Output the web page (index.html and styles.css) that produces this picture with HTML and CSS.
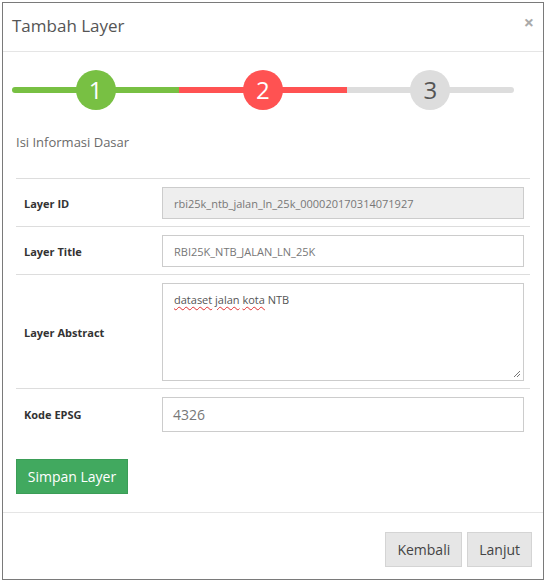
FILE: index.html
```html
<!DOCTYPE html>
<html lang="id">
<head>
<meta charset="utf-8">
<title>Tambah Layer</title>
<link rel="stylesheet" href="styles.css">
</head>
<body>
<div class="modal">
  <div class="modal-header">
    <h4 class="modal-title">Tambah Layer</h4>
    <span class="close">×</span>
  </div>
  <div class="modal-body">
    <div class="steps">
      <div class="step step-done"><span class="bar"></span><span class="circle">1</span></div>
      <div class="step step-active"><span class="bar"></span><span class="circle">2</span></div>
      <div class="step step-todo"><span class="bar"></span><span class="circle">3</span></div>
    </div>
    <p class="step-caption">Isi Informasi Dasar</p>
    <table class="form-table">
      <tr>
        <th>Layer ID</th>
        <td><div class="input input-sm input-readonly">rbi25k_ntb_jalan_ln_25k_000020170314071927</div></td>
      </tr>
      <tr>
        <th>Layer Title</th>
        <td><div class="input input-sm">RBI25K_NTB_JALAN_LN_25K</div></td>
      </tr>
      <tr>
        <th>Layer Abstract</th>
        <td>
          <div class="input textarea"><span class="typo">dataset</span> <span class="typo">jalan</span> <span class="typo">kota</span> NTB<svg class="grip" width="9" height="9" viewBox="0 0 9 9"><path d="M8 2 L2 8 M8 5 L5 8" stroke="#777" stroke-width="1" fill="none"/></svg></div>
        </td>
      </tr>
      <tr class="last">
        <th>Kode EPSG</th>
        <td><div class="input input-md">4326</div></td>
      </tr>
    </table>
    <button class="btn btn-success">Simpan Layer</button>
  </div>
  <div class="modal-footer">
    <button class="btn btn-default">Kembali</button>
    <button class="btn btn-default">Lanjut</button>
  </div>
</div>
</body>
</html>
```
FILE: styles.css
```css
* { box-sizing: border-box; }
html, body { margin: 0; padding: 0; background: #fff; }
body {
  font-family: "Open Sans", "Noto Sans", sans-serif;
  color: #333;
  padding: 2px 0 0 2px;
}
.modal {
  width: 542px;
  border: 1px solid #7a7a7a;
  background: #fff;
}
.modal-header {
  height: 49px;
  border-bottom: 1px solid #e5e5e5;
  display: flex;
  align-items: center;
  justify-content: space-between;
  padding: 0 9px 4px 9px;
}
.modal-title {
  margin: 0;
  font-size: 17px;
  font-weight: 400;
  color: #555;
}
.close {
  font-size: 18px;
  font-weight: 700;
  color: #aaa;
  line-height: 1;
  margin-top: -6px;
}
.modal-body {
  padding: 18px 13px 18px 13px;
}
.steps {
  display: flex;
  margin: 0 16px 0 -4px;
}
.step {
  flex: 1;
  position: relative;
  height: 40px;
  display: flex;
  align-items: center;
  justify-content: center;
}
.bar {
  position: absolute;
  left: 0;
  right: 0;
  top: 17px;
  height: 6px;
}
.circle {
  position: relative;
  width: 40px;
  height: 40px;
  border-radius: 50%;
  display: flex;
  align-items: center;
  justify-content: center;
  font-size: 24px;
  line-height: 1;
  color: #fff;
}
.step-done .bar { background: #78c043; border-radius: 3px 0 0 3px; }
.step-done .circle { background: #78c043; }
.step-active .bar { background: #ff5252; }
.step-active .circle { background: #ff5252; }
.step-todo .bar { background: #dddddd; border-radius: 0 3px 3px 0; }
.step-todo .circle { background: #dddddd; color: #555; }
.step-caption {
  margin: 22px 0 26px 0;
  font-size: 13px;
  line-height: 20px;
  color: #6a6a6a;
}
.form-table {
  width: 100%;
  border-collapse: collapse;
  margin-bottom: 20px;
}
.form-table th,
.form-table td {
  border-top: 1px solid #dddddd;
  padding: 8px 6px 7px 8px;
  vertical-align: middle;
}
.form-table th {
  width: 138px;
  text-align: left;
  font-size: 11px;
  font-weight: 700;
  color: #333;
}
.input {
  width: 100%;
  border: 1px solid #cccccc;
  background: #fff;
  color: #777;
  font-size: 11px;
  padding: 0 11px;
  display: flex;
  align-items: center;
}
.input-sm { height: 32px; }
.input-readonly { background: #eeeeee; }
.input-md { height: 35px; font-size: 14px; padding: 0 10px; }
.textarea {
  position: relative;
  height: 98px;
  padding-top: 8px;
  color: #555;
  display: block;
}
.typo {
  text-decoration: underline wavy #e03030;
  text-decoration-thickness: 1px;
  text-underline-offset: 2px;
}
.grip {
  position: absolute;
  right: 2px;
  bottom: 2px;
}
.btn {
  font-family: "Open Sans", "Noto Sans", sans-serif;
  font-size: 13px;
  white-space: nowrap;
  cursor: pointer;
}
.btn-success {
  display: block;
  background: #41a95f;
  border: 1px solid #3b9d57;
  color: #fff;
  height: 35px;
  padding: 0;
  width: 112px;
  font-size: 14px;
}
.modal-footer {
  border-top: 1px solid #e5e5e5;
  display: flex;
  justify-content: flex-end;
  gap: 5px;
  padding: 19px 11px 12px 0;
}
.btn-default {
  background: #e6e6e6;
  border: 1px solid #d4d4d4;
  color: #444;
  height: 35px;
  padding: 0 11px;
  font-size: 14px;
}
```
